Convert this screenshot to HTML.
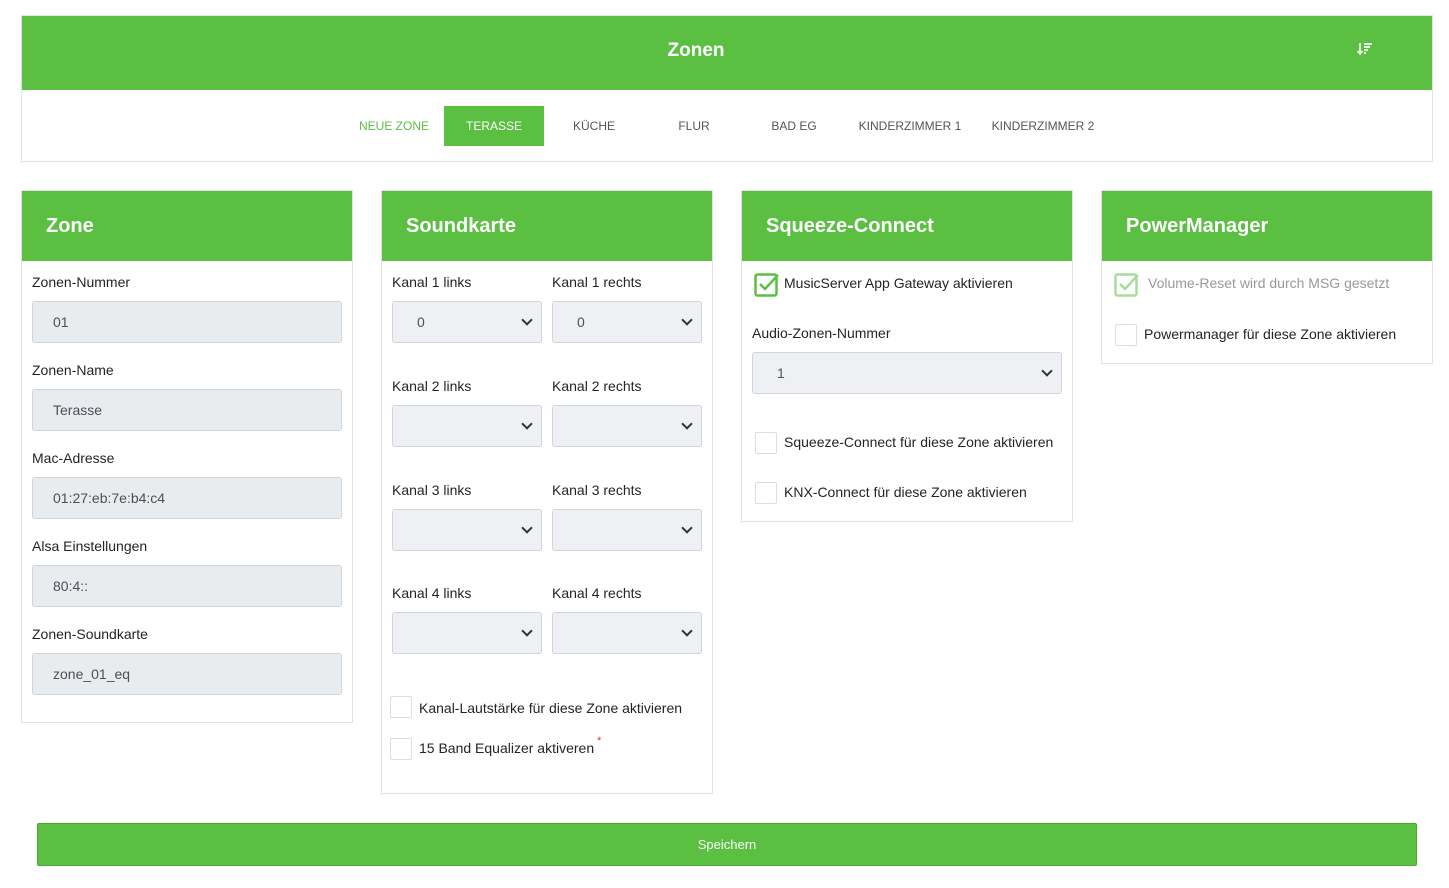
<!DOCTYPE html>
<html><head><style>
*{box-sizing:border-box;margin:0;padding:0}
body{width:1449px;height:888px;background:#fff;font-family:"Liberation Sans",sans-serif;color:#212529;position:relative;overflow:hidden}
.a{position:absolute}
.g{background:#5bbf42}
.card{position:absolute;border:1px solid #e3e3e3;background:#fff}
.ph{position:absolute;left:0;right:0;top:0;height:70px;background:#5bbf42;color:#fff;font-weight:bold;font-size:20px;padding:24px 0 0 24px}
.lbl{position:absolute;font-size:14px;color:#212529}
.inp{position:absolute;height:42px;background:#e9ecef;border:1px solid #ced4da;border-radius:3px;font-size:14px;color:#495057;padding:12px 0 0 20px}
.sel{position:absolute;height:42px;background:#eef0f3;border:1px solid #ced4da;border-radius:3px;font-size:14px;color:#495057;padding:12px 0 0 24px}
.sel:after{content:"";position:absolute;right:10px;top:14px;width:6px;height:6px;border-right:2px solid #333;border-bottom:2px solid #333;transform:rotate(45deg)}
.cb{position:absolute;width:22px;height:22px;border:1px solid #ddd;border-radius:2px;background:#fff}
.tab{position:absolute;top:106px;height:40px;font-size:12px;color:#555;padding-top:13px;text-align:center}
</style></head><body>
<div class="card" style="left:21px;top:15px;width:1412px;height:147px"></div>
<div class="a g" style="left:22px;top:16px;width:1410px;height:74px"></div>
<div class="a" style="left:0;width:1392px;top:40px;text-align:center;color:#fff;font-weight:bold;font-size:19px">Zonen</div>
<svg class="a" style="left:1357px;top:42px" width="16" height="14" viewBox="0 0 16 14"><path d="M3 1v11M0.5 9l2.5 3 2.5-3" stroke="#fff" stroke-width="1.6" fill="none"/><path d="M7 2h8M7 5h6M7 8h4M7 11h2" stroke="#fff" stroke-width="1.8"/></svg>
<div class="tab" style="left:350px;width:88px;color:#5bbf42">NEUE ZONE</div>
<div class="tab g" style="left:444px;width:100px;color:#fff">TERASSE</div>
<div class="tab" style="left:544px;width:100px">KÜCHE</div>
<div class="tab" style="left:644px;width:100px">FLUR</div>
<div class="tab" style="left:744px;width:100px">BAD EG</div>
<div class="tab" style="left:850px;width:120px">KINDERZIMMER 1</div>
<div class="tab" style="left:983px;width:120px">KINDERZIMMER 2</div>

<div class="card" style="left:21px;top:190px;width:332px;height:533px"><div class="ph">Zone</div></div>
<div class="lbl" style="left:32px;top:274px">Zonen-Nummer</div><div class="inp" style="left:32px;top:301px;width:310px">01</div>
<div class="lbl" style="left:32px;top:362px">Zonen-Name</div><div class="inp" style="left:32px;top:389px;width:310px">Terasse</div>
<div class="lbl" style="left:32px;top:450px">Mac-Adresse</div><div class="inp" style="left:32px;top:477px;width:310px">01:27:eb:7e:b4:c4</div>
<div class="lbl" style="left:32px;top:538px">Alsa Einstellungen</div><div class="inp" style="left:32px;top:565px;width:310px">80:4::</div>
<div class="lbl" style="left:32px;top:626px">Zonen-Soundkarte</div><div class="inp" style="left:32px;top:653px;width:310px">zone_01_eq</div>

<div class="card" style="left:381px;top:190px;width:332px;height:604px"><div class="ph">Soundkarte</div></div>
<div class="lbl" style="left:392px;top:274px">Kanal 1 links</div><div class="lbl" style="left:552px;top:274px">Kanal 1 rechts</div>
<div class="sel" style="left:392px;top:301px;width:150px">0</div><div class="sel" style="left:552px;top:301px;width:150px">0</div>
<div class="lbl" style="left:392px;top:378px">Kanal 2 links</div><div class="lbl" style="left:552px;top:378px">Kanal 2 rechts</div>
<div class="sel" style="left:392px;top:405px;width:150px"></div><div class="sel" style="left:552px;top:405px;width:150px"></div>
<div class="lbl" style="left:392px;top:482px">Kanal 3 links</div><div class="lbl" style="left:552px;top:482px">Kanal 3 rechts</div>
<div class="sel" style="left:392px;top:509px;width:150px"></div><div class="sel" style="left:552px;top:509px;width:150px"></div>
<div class="lbl" style="left:392px;top:585px">Kanal 4 links</div><div class="lbl" style="left:552px;top:585px">Kanal 4 rechts</div>
<div class="sel" style="left:392px;top:612px;width:150px"></div><div class="sel" style="left:552px;top:612px;width:150px"></div>
<div class="cb" style="left:390px;top:696px"></div><div class="lbl" style="left:419px;top:700px">Kanal-Lautstärke für diese Zone aktivieren</div>
<div class="cb" style="left:390px;top:738px"></div><div class="lbl" style="left:419px;top:740px">15 Band Equalizer aktiveren</div>
<div class="a" style="left:597px;top:735px;color:#d33;font-size:11px">*</div>

<div class="card" style="left:741px;top:190px;width:332px;height:332px"><div class="ph">Squeeze-Connect</div></div>
<svg class="a" style="left:754px;top:271px" width="27" height="26" viewBox="0 0 27 26"><rect x="1.5" y="3.5" width="21" height="21" rx="2" fill="#fff" stroke="#5bbf42" stroke-width="2.5"/><path d="M6 13l5 5 13-14" fill="none" stroke="#5bbf42" stroke-width="2.5"/></svg>
<div class="lbl" style="left:784px;top:275px">MusicServer App Gateway aktivieren</div>
<div class="lbl" style="left:752px;top:325px">Audio-Zonen-Nummer</div>
<div class="sel" style="left:752px;top:352px;width:310px">1</div>
<div class="cb" style="left:755px;top:432px"></div><div class="lbl" style="left:784px;top:434px">Squeeze-Connect für diese Zone aktivieren</div>
<div class="cb" style="left:755px;top:482px"></div><div class="lbl" style="left:784px;top:484px">KNX-Connect für diese Zone aktivieren</div>

<div class="card" style="left:1101px;top:190px;width:332px;height:174px"><div class="ph">PowerManager</div></div>
<svg class="a" style="left:1114px;top:271px" width="27" height="26" viewBox="0 0 27 26"><rect x="1.5" y="3.5" width="21" height="21" rx="2" fill="#fff" stroke="#a9dc9c" stroke-width="2.5"/><path d="M6 13l5 5 13-14" fill="none" stroke="#a9dc9c" stroke-width="2.5"/></svg>
<div class="lbl" style="left:1148px;top:275px;color:#999">Volume-Reset wird durch MSG gesetzt</div>
<div class="cb" style="left:1115px;top:324px"></div><div class="lbl" style="left:1144px;top:326px">Powermanager für diese Zone aktivieren</div>

<div class="a g" style="left:37px;top:823px;width:1380px;height:43px;border:1px solid #4aa835;border-radius:2px;color:#fff;font-size:13px;text-align:center;padding-top:13px">Speichern</div>
</body></html>
